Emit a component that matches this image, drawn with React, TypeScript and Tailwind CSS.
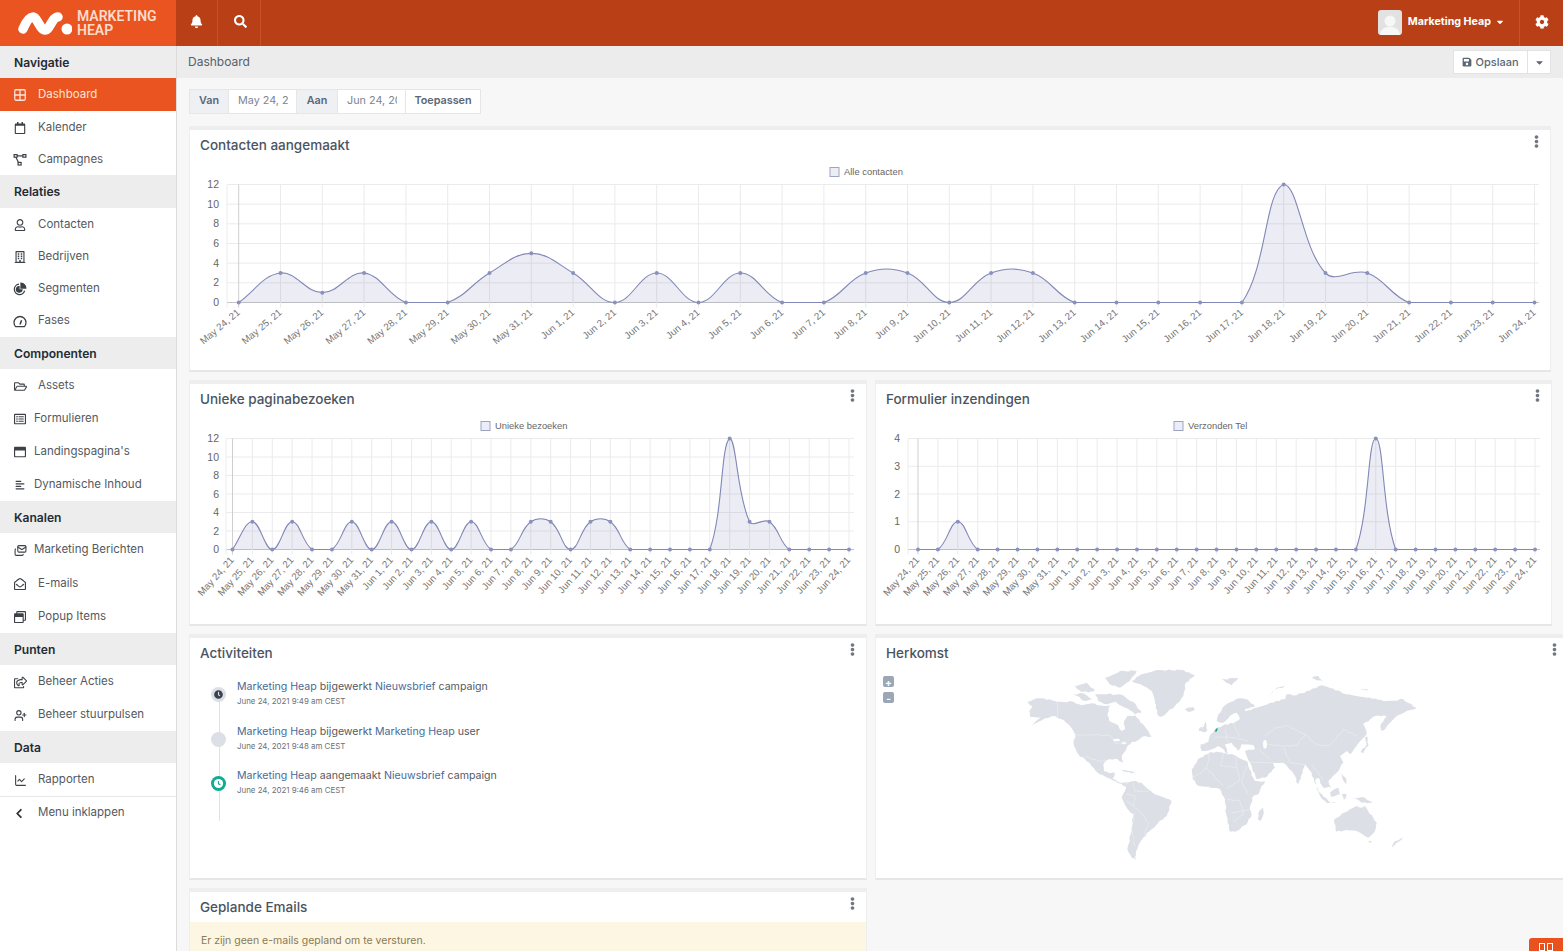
import type { ReactNode } from "react";
import {
  FaAlignLeft,
  FaBell,
  FaCaretDown,
  FaChevronLeft,
  FaClock,
  FaCog,
  FaEllipsisV,
  FaRegBuilding,
  FaRegCalendar,
  FaRegEnvelopeOpen,
  FaRegFolderOpen,
  FaRegListAlt,
  FaRegShareSquare,
  FaRegUser,
  FaRegWindowMaximize,
  FaRegWindowRestore,
  FaSave,
  FaSearch,
} from "react-icons/fa";
import { ChartLine, Grid2x2, Mails, UserPlus } from "lucide-react";

const sitemapIcon = (
  <svg width="14" height="12" viewBox="0 0 13 12" fill="none" stroke="currentColor" strokeWidth="1.2">
    <rect x="0.6" y="0.6" width="3" height="2.6" />
    <rect x="9.4" y="0.6" width="3" height="2.6" />
    <rect x="4.6" y="8.4" width="3" height="2.6" />
    <path d="M3.6 1.9H9.4M2.4 3.2L5 8.4" />
  </svg>
);

const pieIcon = (
  <svg width="14" height="14" viewBox="0 0 14 14" fill="none" stroke="currentColor" strokeWidth="1.3">
    <path d="M6 2.2A5.2 5.2 0 1 0 11.6 8.6" />
    <path d="M8 1.2A5 5 0 0 1 12.8 6H8Z" fill="currentColor" />
    <path d="M6 4.6A2.8 2.8 0 1 0 9 8H6Z" fill="currentColor" />
  </svg>
);

const gaugeIcon = (
  <svg width="14" height="13" viewBox="0 0 14 13" fill="none" stroke="currentColor" strokeWidth="1.3">
    <path d="M2.6 11.6A6 6 0 1 1 11.4 11.6Z" />
    <path d="M7 9.4L8.6 5.2" strokeWidth="1.5" />
  </svg>
);

type NavRow = { label: string; icon?: ReactNode; h: number; indent?: number; active?: boolean };

const nav: NavRow[] = [
  { label: "Navigatie", h: 32 },
  { label: "Dashboard", icon: <Grid2x2 size={14} strokeWidth={2.2} />, h: 33, active: true },
  { label: "Kalender", icon: <FaRegCalendar size={12} />, h: 32 },
  { label: "Campagnes", icon: sitemapIcon, h: 32 },
  { label: "Relaties", h: 33 },
  { label: "Contacten", icon: <FaRegUser size={12} />, h: 32 },
  { label: "Bedrijven", icon: <FaRegBuilding size={12} />, h: 32 },
  { label: "Segmenten", icon: pieIcon, h: 32 },
  { label: "Fases", icon: gaugeIcon, h: 33 },
  { label: "Componenten", h: 32 },
  { label: "Assets", icon: <FaRegFolderOpen size={13} />, h: 33 },
  { label: "Formulieren", icon: <FaRegListAlt size={12} />, h: 33, indent: 34 },
  { label: "Landingspagina's", icon: <FaRegWindowMaximize size={12} />, h: 33, indent: 34 },
  { label: "Dynamische Inhoud", icon: <FaAlignLeft size={10} />, h: 33, indent: 34 },
  { label: "Kanalen", h: 32 },
  { label: "Marketing Berichten", icon: <Mails size={13} />, h: 33, indent: 34 },
  { label: "E-mails", icon: <FaRegEnvelopeOpen size={12} />, h: 34 },
  { label: "Popup Items", icon: <FaRegWindowRestore size={12} />, h: 33 },
  { label: "Punten", h: 32 },
  { label: "Beheer Acties", icon: <FaRegShareSquare size={13} />, h: 33 },
  { label: "Beheer stuurpulsen", icon: <UserPlus size={13} />, h: 33 },
  { label: "Data", h: 32 },
  { label: "Rapporten", icon: <ChartLine size={13} />, h: 33 },
];

function SideRow({ row }: { row: NavRow }) {
  if (!row.icon) {
    return (
      <div
        className="flex items-center bg-[#ededed] pl-[14px] pt-[2px] text-[12.1px] font-semibold text-[#232b33]"
        style={{ height: row.h }}
      >
        {row.label}
      </div>
    );
  }
  return (
    <div
      className={
        row.active
          ? "relative flex items-center bg-[#ea5420] pt-[1px] text-[11.5px] text-[#fbe4da]"
          : "relative flex items-center pt-[1px] text-[11.5px] text-[#55595e]"
      }
      style={{ height: row.h, paddingLeft: row.indent ?? 38 }}
    >
      <span
        className={
          row.active
            ? "absolute left-[13px] flex w-[14px] items-center justify-center"
            : "absolute left-[13px] flex w-[14px] items-center justify-center text-[#3c4148]"
        }
      >
        {row.icon}
      </span>
      {row.label}
    </div>
  );
}

const dates = [
  ...[24, 25, 26, 27, 28, 29, 30, 31].map((d) => `May ${d}, 21`),
  ...Array.from({ length: 24 }, (_, i) => `Jun ${i + 1}, 21`),
];

const contacten = [0, 3, 1, 3, 0, 0, 3, 5, 3, 0, 3, 0, 3, 0, 0, 3, 3, 0, 3, 3, 0, 0, 0, 0, 0, 12, 3, 3, 0, 0, 0, 0];
const bezoeken = [0, 3, 0, 3, 0, 0, 3, 0, 3, 0, 3, 0, 3, 0, 0, 3, 3, 0, 3, 3, 0, 0, 0, 0, 0, 12, 3, 3, 0, 0, 0, 0];
const formulieren = [0, 0, 1, 0, 0, 0, 0, 0, 0, 0, 0, 0, 0, 0, 0, 0, 0, 0, 0, 0, 0, 0, 0, 4, 0, 0, 0, 0, 0, 0, 0, 0];

// same spline maths as chart.js (tension .4, capped to the plot area)
function splinePath(pts: { x: number; y: number }[], top: number, bottom: number) {
  const cps = pts.map((p, i) => {
    const a = pts[i - 1] ?? p;
    const b = pts[i + 1] ?? p;
    const d01 = Math.hypot(p.x - a.x, p.y - a.y);
    const d12 = Math.hypot(b.x - p.x, b.y - p.y);
    const sum = d01 + d12 || 1;
    const fa = (0.4 * d01) / sum;
    const fb = (0.4 * d12) / sum;
    const cap = (v: number) => Math.min(bottom, Math.max(top, v));
    return {
      px: p.x - fa * (b.x - a.x),
      py: cap(p.y - fa * (b.y - a.y)),
      nx: p.x + fb * (b.x - a.x),
      ny: cap(p.y + fb * (b.y - a.y)),
    };
  });
  let d = `M${pts[0].x} ${pts[0].y}`;
  for (let i = 1; i < pts.length; i++) {
    d += `C${cps[i - 1].nx} ${cps[i - 1].ny} ${cps[i].px} ${cps[i].py} ${pts[i].x} ${pts[i].y}`;
  }
  return d;
}

type ChartProps = {
  width: number;
  data: number[];
  ticks: number[];
  legend: string;
  legendX: number;
  axisX: number;
  firstX: number;
  lastX: number;
  endX: number;
  labelX: number;
  bottom: number;
  angle: number;
};

function LineChart({ width, data, ticks, legend, legendX, axisX, firstX, lastX, endX, labelX, bottom, angle }: ChartProps) {
  const top = 19.5;
  const max = ticks[0];
  const step = (lastX - firstX) / (data.length - 1);
  const pts = data.map((v, i) => ({ x: firstX + i * step, y: bottom - (v / max) * (bottom - top) }));
  const line = splinePath(pts, top, bottom);
  const axisFont = "[font-family:'Liberation_Sans',Arial,sans-serif]";
  return (
    <svg width={width} height={205} className="block">
      <rect x={legendX} y={2.5} width={9} height={9} fill="#eceef5" stroke="#9ea4c6" />
      <text x={legendX + 14} y={10} className={`${axisFont} fill-[#666666] text-[9.4px]`}>
        {legend}
      </text>
      {ticks.map((t, i) => {
        const y = top + (i * (bottom - top)) / (ticks.length - 1);
        return (
          <g key={t}>
            <line x1={axisX} x2={endX} y1={y} y2={y} stroke={t === 0 ? "#c4c4c4" : "#ebebeb"} />
            <text x={labelX} y={y + 3.5} textAnchor="end" className={`${axisFont} fill-[#666666] text-[10.5px]`}>
              {t}
            </text>
          </g>
        );
      })}
      <line x1={axisX} x2={axisX} y1={top} y2={bottom + 5} stroke="#ececec" />
      {pts.map((p, i) => (
        <g key={i}>
          <line x1={p.x} x2={p.x} y1={top} y2={bottom + 5} stroke={i === 0 ? "#cfcfcf" : "#ebebeb"} />
          <text
            x={p.x + 2}
            y={bottom + 11}
            textAnchor="end"
            transform={`rotate(-${angle} ${p.x + 2} ${bottom + 11})`}
            className={`${axisFont} fill-[#777777] text-[9.8px]`}
          >
            {dates[i]}
          </text>
        </g>
      ))}
      <path d={`${line}L${lastX} ${bottom}L${firstX} ${bottom}Z`} fill="rgba(78,93,157,0.11)" />
      <path d={line} fill="none" stroke="#8187b6" strokeWidth="1.1" />
      {pts.map((p, i) => (
        <circle key={i} cx={p.x} cy={p.y} r="2" fill="#8b91bd" />
      ))}
    </svg>
  );
}

function Card({ title, className, children }: { title: string; className: string; children: ReactNode }) {
  return (
    <div
      className={`relative shrink-0 border-x border-b-2 border-t-4 border-x-[#eeeeee] border-b-[#e6e6e6] border-t-[#eeeeee] bg-white ${className}`}
    >
      <div className="flex h-[35px] items-center justify-between pb-[4px] pl-[10px] pr-[7px]">
        <h3 className="text-[13.5px] font-medium text-[#4a545f]">{title}</h3>
        <FaEllipsisV size={13} className="mb-[9px] text-[#70777f]" />
      </div>
      {children}
    </div>
  );
}

const link = "text-[#4a6a96]";

function Activity({ who, verb, what, kind, time, icon }: { who: string; verb: string; what: string; kind: string; time: string; icon: ReactNode }) {
  return (
    <div className="relative h-[44.5px] pl-[47px]">
      <div className="absolute left-[21px] top-[8px]">{icon}</div>
      <p className="text-[10.6px] leading-[16px] text-[#55595e]">
        <span className={link}>{who}</span> {verb} <span className={link}>{what}</span> {kind}
      </p>
      <p className="text-[7.9px] leading-[12px] text-[#6b7178]">{time}</p>
    </div>
  );
}

// roughens a traced outline a bit so that long edges read as coastline
function rough(points: string, closed: boolean) {
  const pts = points.split(" ").map((p) => p.split(",").map(Number));
  const out: number[][] = [];
  const n = closed ? pts.length : pts.length - 1;
  for (let i = 0; i < n; i++) {
    const [x1, y1] = pts[i];
    const [x2, y2] = pts[(i + 1) % pts.length];
    const len = Math.hypot(x2 - x1, y2 - y1);
    const parts = Math.max(1, Math.round(len / 9));
    out.push([x1, y1]);
    for (let k = 1; k < parts; k++) {
      const h = Math.sin(x1 * 12.98 + y1 * 78.23 + k * 37.7) * 43758.5;
      const o = (h - Math.floor(h) - 0.5) * 5;
      out.push([x1 + ((x2 - x1) * k) / parts - ((y2 - y1) / len) * o, y1 + ((y2 - y1) * k) / parts + ((x2 - x1) / len) * o]);
    }
  }
  if (!closed) out.push(pts[pts.length - 1]);
  return out.map((p) => `${p[0].toFixed(1)},${p[1].toFixed(1)}`).join(" ");
}

// world map traced by hand, in crop coordinates of the two halves
const westLand = [
  "22,108 50,97 90,100 112,107 160,107 185,118 215,112 250,120 270,118 262,145 268,165 295,178 305,195 315,190 312,165 322,150 345,148 362,170 385,195 395,212 375,210 355,222 335,228 320,245 305,270 310,290 298,285 285,278 262,282 250,295 252,315 270,322 285,320 278,338 300,350 322,347 318,362 295,352 270,338 240,325 220,305 195,280 175,265 162,240 165,205 145,175 125,160 105,150 75,157 35,180 62,155 30,152 28,135 38,122",
  "165,60 200,50 225,75 185,78",
  "160,85 190,82 215,100 195,105",
  "225,85 270,82 300,105 262,115 235,105",
  "255,35 300,15 350,15 330,45 300,65 270,55",
  "270,85 300,85 340,108 365,140 345,145 315,125 290,110",
  "335,45 365,25 420,12 490,12 525,28 497,50 490,90 465,120 430,150 415,150 405,110 395,75 370,60",
  "495,130 520,123 525,132 505,138",
  "555,165 562,195 545,198 552,180",
  "538,185 548,182 546,195 537,195",
  "295,308 330,315 345,320 320,318",
  "322,350 340,345 365,350 385,370 405,385 455,405 440,450 415,470 395,490 370,515 355,540 345,575 350,582 335,575 322,550 335,490 340,445 320,425 305,395 318,365",
];

const westBorders = [
  "110,107 112,155",
  "165,205 270,208 285,232 320,225",
  "195,272 235,285 262,282",
  "320,385 345,390 340,420 365,440 385,470 370,515",
  "340,350 345,375 380,378 395,370",
  "345,440 335,490 345,540",
  "340,420 318,405",
];

const eastLand = [
  "5,310 30,275 60,258 100,260 140,270 170,285 175,300 195,345 225,345 205,385 190,390 180,420 185,445 170,475 135,497 120,497 110,450 105,400 90,370 55,362 25,360 8,340",
  "220,425 222,440 212,465 203,460 205,440",
  "32,235 55,228 62,205 75,190 105,175 130,172 150,158 140,140 120,150 100,170 80,165 85,145 105,118 140,98 170,100 195,122 165,130 165,135 200,125 240,110 285,100 290,85 320,88 350,75 395,58 430,68 470,85 530,95 590,105 640,100 680,125 650,135 620,150 600,170 585,190 575,195 572,175 590,150 555,150 520,175 530,205 500,240 480,265 470,255 450,270 460,290 440,320 415,345 425,365 400,365 385,335 375,345 390,385 380,365 365,320 345,295 325,355 305,315 280,290 250,290 255,305 225,335 200,340 180,290 165,255 195,250 190,237 155,235 145,255 125,230 105,235 115,265 85,240 65,250 35,255",
  "512,258 530,235 526,212 533,212 536,238 520,262",
  "375,365 415,405 400,402",
  "405,405 440,410 412,412",
  "420,380 445,365 450,385 425,393",
  "455,385 470,385 462,402",
  "490,395 525,395 548,412 515,410",
  "455,320 470,340 470,355 458,340",
  "433,460 480,430 500,420 515,425 525,420 560,470 555,495 535,515 500,495 470,492 438,497",
  "535,525 545,525 540,532",
  "640,515 620,530 605,545 615,525",
  "230,95 260,65 285,60 250,75",
  "95,40 145,35 125,58",
  "365,35 385,30 400,47",
  "510,68 530,68 535,75",
];

const eastBorders = [
  "60,258 50,305 100,360",
  "100,262 92,300 140,305 150,340 110,365",
  "140,270 140,305",
  "170,300 155,345 175,385",
  "110,400 150,405 160,445 130,465",
  "125,440 180,430",
  "5,340 50,305",
  "225,210 260,185 290,178 345,205 380,235 420,238 460,190 500,210",
  "345,205 320,240 280,240 235,235",
  "280,245 300,290 345,295",
  "180,290 250,290",
  "75,215 130,215 175,225",
  "105,190 115,235",
  "365,295 400,340",
  "130,172 150,215",
  "205,250 240,280",
];

function WorldMap() {
  return (
    <svg width="405" height="200" viewBox="1020 665 405 200" className="ml-[144px] block">
      <g transform="translate(1020 665) scale(.3333)">
        {westLand.map((p) => (
          <polygon key={p} points={rough(p, true)} fill="#dcdfe5" />
        ))}
        {westBorders.map((p) => (
          <polyline key={p} points={rough(p, false)} fill="none" stroke="#f0f1f4" strokeWidth="1.6" />
        ))}
        <ellipse cx="290" cy="222" rx="10" ry="4" fill="#ffffff" />
        <ellipse cx="312" cy="232" rx="8" ry="3" fill="#ffffff" />
      </g>
      <g transform="translate(1190 665) scale(.3333)">
        {eastLand.map((p) => (
          <polygon key={p} points={rough(p, true)} fill="#dcdfe5" />
        ))}
        {eastBorders.map((p) => (
          <polyline key={p} points={rough(p, false)} fill="none" stroke="#f0f1f4" strokeWidth="1.6" />
        ))}
        <ellipse cx="225" cy="235" rx="6" ry="13" fill="#ffffff" />
        <polygon points="74,196 80,187 84,188 79,198" fill="#12a98f" />
      </g>
    </svg>
  );
}

export default function App() {
  return (
    <div className="flex h-[951px] w-full flex-col overflow-hidden bg-[#f7f7f7] [font-family:Inter,sans-serif]">
      {/* top bar */}
      <header className="flex h-[46px] shrink-0 items-stretch bg-[#b83f16] text-white">
        <div className="flex w-[176px] items-center gap-[5px] bg-[#ea5420] pb-[1px] pl-[18px]">
          <svg width="54" height="26" viewBox="0 0 54 26" className="shrink-0">
            <path d="M5 19C8 12 11 7 15 7S22 20 27 20S34 7 40 7" fill="none" stroke="#fff" strokeWidth="9.5" strokeLinecap="round" />
            <circle cx="49" cy="19" r="5.5" fill="#fff" />
          </svg>
          <div className="text-[14px] font-semibold leading-[14px] text-[#fbdccd] [font-family:Roboto,sans-serif]">
            MARKETING
            <br />
            HEAP
          </div>
        </div>
        <div className="flex w-[42px] items-center justify-center border-r border-[#c9522a] pb-[3px]">
          <FaBell size={13} />
        </div>
        <div className="flex w-[43px] items-center justify-center border-r border-[#c9522a] pb-[3px] pl-[2px]">
          <FaSearch size={13} />
        </div>
        <div className="flex-1" />
        <div className="flex items-center pb-[2px]">
          <div className="mr-[6px] flex h-[25px] w-[24px] items-end justify-center overflow-hidden rounded-[3px] bg-[#e2e2e2]">
            <svg width="20" height="22" viewBox="0 0 20 22">
              <circle cx="10" cy="8" r="5.5" fill="#f7f7f7" />
              <path d="M0 22C1 15 5 14 10 14S19 15 20 22Z" fill="#f7f7f7" />
            </svg>
          </div>
          <span className="text-[10.7px] font-bold">Marketing Heap</span>
          <FaCaretDown size={10} className="ml-[4px] mr-[14px]" />
        </div>
        <div className="flex w-[44px] items-center justify-center border-l border-[#c9522a] pb-[3px]">
          <FaCog size={14} />
        </div>
      </header>

      <div className="flex min-h-0 flex-1">
        {/* sidebar */}
        <aside className="w-[177px] shrink-0 border-r border-[#dcdcdc] bg-white">
          {nav.map((row) => (
            <SideRow key={row.label} row={row} />
          ))}
          <div className="relative flex h-[33px] items-center border-t border-[#e8e8e8] pl-[38px] text-[11.5px] text-[#55595e]">
            <span className="absolute left-[14px] flex w-[10px] justify-center text-[#2c3238]">
              <FaChevronLeft size={11} />
            </span>
            Menu inklappen
          </div>
        </aside>

        {/* main */}
        <main className="relative min-w-0 flex-1 overflow-hidden">
          <div className="flex h-[32px] items-center justify-between bg-[#ececec] pl-[11px] pr-[12px]">
            <span className="text-[12px] text-[#55606c]">Dashboard</span>
            <div className="flex h-[24px] border border-[#e3e3e3] bg-white text-[11px] font-medium text-[#5a6675]">
              <div className="flex w-[74px] items-center justify-center gap-[3px] border-r border-[#e3e3e3]">
                <FaSave size={10} />
                Opslaan
              </div>
              <div className="flex w-[22px] items-center justify-center">
                <FaCaretDown size={11} />
              </div>
            </div>
          </div>

          <div className="pl-[12px] pt-[11px]">
            <div className="flex h-[25px] w-[292px] border border-[#e6e6e6] text-[10.8px] text-[#7c8490]">
              <div className="flex w-[39px] items-center justify-center border-r border-[#e6e6e6] bg-[#eff0f3] font-semibold text-[#5a6675]">Van</div>
              <div className="flex w-[68px] items-center overflow-hidden whitespace-nowrap border-r border-[#e6e6e6] bg-white pl-[9px]">
                <span className="block w-[50px] overflow-hidden">May 24, 2021</span>
              </div>
              <div className="flex w-[41px] items-center justify-center border-r border-[#e6e6e6] bg-[#eff0f3] font-semibold text-[#5a6675]">Aan</div>
              <div className="flex w-[68px] items-center overflow-hidden whitespace-nowrap border-r border-[#e6e6e6] bg-white pl-[9px]">
                <span className="block w-[50px] overflow-hidden">Jun 24, 2021</span>
              </div>
              <div className="flex flex-1 items-center justify-center bg-white font-semibold text-[#5a6675]">Toepassen</div>
            </div>

            <div className="mt-[12px] flex flex-col gap-[8px]">
              <Card title="Contacten aangemaakt" className="h-[246px] w-[1362px]">
                <LineChart
                  width={1360}
                  data={contacten}
                  ticks={[12, 10, 8, 6, 4, 2, 0]}
                  legend="Alle contacten"
                  legendX={640}
                  axisX={37}
                  firstX={48.7}
                  lastX={1344.5}
                  endX={1349}
                  labelX={29}
                  bottom={137.5}
                  angle={40}
                />
              </Card>
              <div className="flex gap-[8px]">
                <Card title="Unieke paginabezoeken" className="h-[246px] w-[678px]">
                  <LineChart
                    width={676}
                    data={bezoeken}
                    ticks={[12, 10, 8, 6, 4, 2, 0]}
                    legend="Unieke bezoeken"
                    legendX={291}
                    axisX={36}
                    firstX={42.5}
                    lastX={659}
                    endX={664}
                    labelX={29}
                    bottom={130.5}
                    angle={48}
                  />
                </Card>
                <Card title="Formulier inzendingen" className="h-[246px] w-[677px]">
                  <LineChart
                    width={675}
                    data={formulieren}
                    ticks={[4, 3, 2, 1, 0]}
                    legend="Verzonden Tel"
                    legendX={298}
                    axisX={32}
                    firstX={42}
                    lastX={659}
                    endX={664}
                    labelX={24}
                    bottom={130.5}
                    angle={48}
                  />
                </Card>
              </div>
              <div className="flex gap-[8px]">
                <Card title="Activiteiten" className="h-[246px] w-[678px]">
                  <div className="relative mt-[6px]">
                    <div className="absolute bottom-[-8px] left-[29px] top-[10px] w-px bg-[#dfe1e6]" />
                    <Activity
                      who="Marketing Heap"
                      verb="bijgewerkt"
                      what="Nieuwsbrief"
                      kind="campaign"
                      time="June 24, 2021 9:49 am CEST"
                      icon={
                        <div className="flex h-[15px] w-[15px] items-center justify-center rounded-full bg-[#dcdfe5]">
                          <FaClock size={9} className="text-[#3a4250]" />
                        </div>
                      }
                    />
                    <Activity
                      who="Marketing Heap"
                      verb="bijgewerkt"
                      what="Marketing Heap"
                      kind="user"
                      time="June 24, 2021 9:48 am CEST"
                      icon={<div className="h-[15px] w-[15px] rounded-full bg-[#dcdfe5]" />}
                    />
                    <Activity
                      who="Marketing Heap"
                      verb="aangemaakt"
                      what="Nieuwsbrief"
                      kind="campaign"
                      time="June 24, 2021 9:46 am CEST"
                      icon={
                        <svg width="15" height="15" viewBox="0 0 15 15" className="block">
                          <circle cx="7.5" cy="7.5" r="7.5" fill="#10ab90" />
                          <circle cx="7.5" cy="7.5" r="4.6" fill="#fff" />
                          <path d="M7.5 5V7.8L9.4 8.8" fill="none" stroke="#10ab90" strokeWidth="1.1" />
                        </svg>
                      }
                    />
                  </div>
                </Card>
                <Card title="Herkomst" className="h-[246px] w-[694px]">
                  <div className="absolute left-[7px] top-[38px] flex flex-col gap-[5px]">
                    <div className="flex h-[11px] w-[11px] items-center justify-center rounded-[2px] bg-[#9ba6b6] text-[10px] font-bold leading-none text-white">+</div>
                    <div className="flex h-[11px] w-[11px] items-center justify-center rounded-[2px] bg-[#9ba6b6] text-[10px] font-bold leading-none text-white">-</div>
                  </div>
                  <div className="mt-[-7px]">
                    <WorldMap />
                  </div>
                </Card>
              </div>
              <Card title="Geplande Emails" className="h-[100px] w-[678px]">
                <div className="relative mt-[-5px] flex h-[40px] items-start bg-[#fdf6e3] pl-[11px] pt-[12px] text-[10.5px] leading-[14px] text-[#8a7a52]">
                  Er zijn geen e-mails gepland om te versturen.
                </div>
              </Card>
            </div>
          </div>

          <div className="absolute bottom-0 right-0 flex h-[13px] w-[34px] justify-center rounded-tl-[3px] bg-[#e9521f] pt-[5px]">
            <div className="flex gap-[2px]">
              <div className="h-[8px] w-[6px] border border-white" />
              <div className="h-[8px] w-[6px] border border-white" />
            </div>
          </div>
        </main>
      </div>
    </div>
  );
}
